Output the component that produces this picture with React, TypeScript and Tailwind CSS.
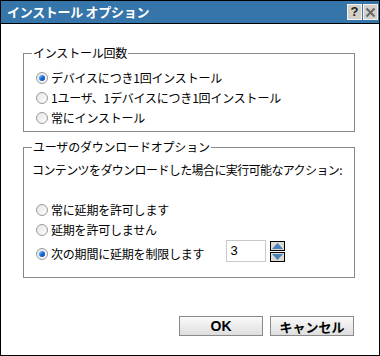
import React from "react";

const jp = { fontFamily: '"Noto Sans CJK JP", "Noto Sans", sans-serif' };

function Radio({ checked }: { checked?: boolean }) {
  return (
    <span className="relative inline-flex h-[12px] w-[12px] shrink-0 items-center justify-center rounded-full border border-[#9a9a9a] bg-gradient-to-br from-[#e6e6e6] to-[#fcfcfc]">
      {checked && (
        <span className="h-[6px] w-[6px] rounded-full bg-gradient-to-br from-[#8fd0ff] via-[#1a6ed8] to-[#0b3f9a]" />
      )}
    </span>
  );
}

function Option({ label, checked }: { label: string; checked?: boolean }) {
  return (
    <label className="flex h-[20px] items-center gap-[3px] pl-[12px]">
      <Radio checked={checked} />
      <span className="tracking-[-0.2px]">{label}</span>
    </label>
  );
}

function Spinner() {
  return (
    <div className="flex flex-col gap-[1px]">
      <div className="flex h-[10px] w-[15px] items-center justify-center border border-black bg-[#dcdad2]">
        <svg width="11" height="6" viewBox="0 0 11 6">
          <path d="M0 6 L5.5 0 L11 6 Z" fill="#4a7fb8" />
        </svg>
      </div>
      <div className="flex h-[10px] w-[15px] items-center justify-center border border-black bg-[#dcdad2]">
        <svg width="11" height="6" viewBox="0 0 11 6">
          <path d="M0 0 L5.5 6 L11 0 Z" fill="#4a7fb8" />
        </svg>
      </div>
    </div>
  );
}

export default function App() {
  return (
    <div
      className="flex h-[356px] w-[380px] flex-col border border-black bg-white text-[12px] leading-[16px] text-black"
      style={jp}
    >
      {/* TITLE BAR */}
      <div className="flex h-[23px] items-center justify-between border-b border-black bg-[#3575a9] pl-[6px] pr-[1px]">
        <span className="text-[13px] font-bold tracking-[-0.3px] text-white">インストール オプション</span>
        <div className="flex gap-[1px]">
          <span className="flex h-[16px] w-[15px] items-center justify-center border border-[#f4f4f4] bg-[#d4d0c8] font-['Liberation_Sans'] text-[13px] font-bold text-[#222]">
            ?
          </span>
          <span className="flex h-[16px] w-[15px] items-center justify-center border border-[#f4f4f4] bg-[#d4d0c8]">
            <svg width="11" height="11" viewBox="0 0 11 11">
              <path d="M1.5 1.5 L9.5 9.5 M9.5 1.5 L1.5 9.5" stroke="#666" strokeWidth="2" />
            </svg>
          </span>
        </div>
      </div>

      {/* INSTALL COUNT */}
      <fieldset className="ml-[22px] mt-[21px] w-[332px] border border-[#888] pb-[3px]">
        <legend className="ml-[8px] px-[1px] tracking-[-0.2px]">インストール回数</legend>
        <div className="pt-[7px]">
          <Option label="デバイスにつき1回インストール" checked />
          <Option label="1ユーザ、1デバイスにつき1回インストール" />
          <Option label="常にインストール" />
        </div>
      </fieldset>

      {/* DOWNLOAD OPTIONS */}
      <fieldset className="ml-[22px] mt-[7px] w-[332px] border border-[#888] pb-[13px]">
        <legend className="ml-[8px] px-[1px] tracking-[-0.2px]">ユーザのダウンロードオプション</legend>
        <p className="pl-[8px] pt-[7px] tracking-[-0.6px]">
          コンテンツをダウンロードした場合に実行可能なアクション:
        </p>
        <div className="pt-[22px]">
          <Option label="常に延期を許可します" />
          <Option label="延期を許可しません" />
          <div className="flex items-end">
            <label className="flex h-[20px] items-center gap-[3px] pl-[12px]">
              <Radio checked />
              <span className="tracking-[-0.2px]">次の期間に延期を制限します</span>
            </label>
            <div className="mb-[2px] ml-[22px] flex items-center gap-[4px]">
              <div className="flex h-[22px] w-[40px] items-center border border-[#c8c8c8] pl-[3px] font-['Liberation_Sans'] text-[13px]">
                3
              </div>
              <Spinner />
            </div>
          </div>
        </div>
      </fieldset>

      {/* BUTTONS */}
      <div className="mt-[38px] flex justify-end gap-[7px] pr-[25px]">
        <button className="h-[20px] w-[84px] border border-[#8a8a8a] bg-gradient-to-b from-[#fafafa] to-[#dedede] font-['Liberation_Sans'] text-[14px] font-bold leading-none">
          OK
        </button>
        <button className="h-[20px] w-[84px] border border-[#8a8a8a] bg-gradient-to-b from-[#fafafa] to-[#dedede] text-[13px] font-bold leading-none">
          キャンセル
        </button>
      </div>
    </div>
  );
}
